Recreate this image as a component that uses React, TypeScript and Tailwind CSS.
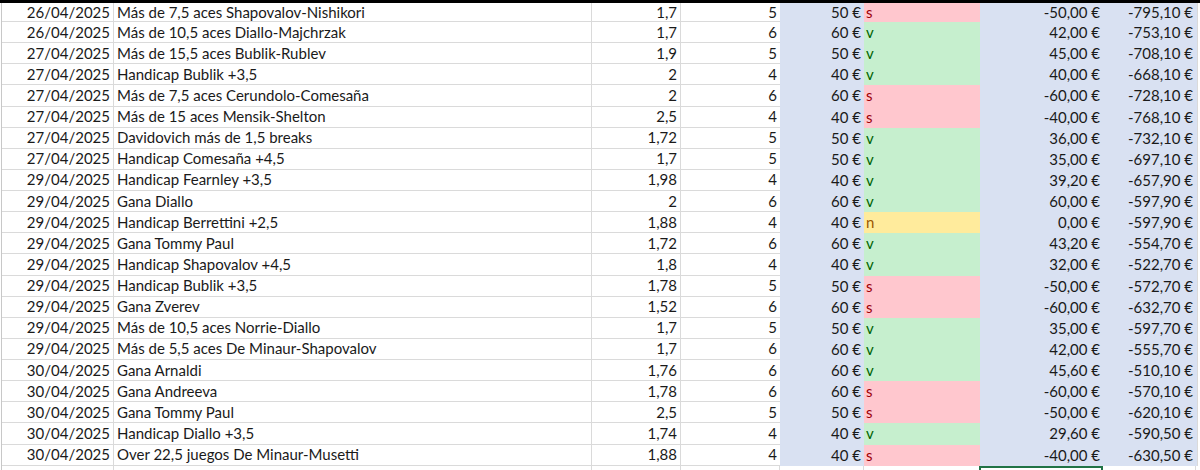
import React from 'react';

type Bet = {
  date: string;
  desc: string;
  odds: string;
  units: string;
  stake: string;
  res: 's' | 'v' | 'n';
  profit: string;
  total: string;
};

const rows: Bet[] = [
  { date: '26/04/2025', desc: 'Más de 7,5 aces Shapovalov-Nishikori', odds: '1,7', units: '5', stake: '50 €', res: 's', profit: '-50,00 €', total: '-795,10 €' },
  { date: '26/04/2025', desc: 'Más de 10,5 aces Diallo-Majchrzak', odds: '1,7', units: '6', stake: '60 €', res: 'v', profit: '42,00 €', total: '-753,10 €' },
  { date: '27/04/2025', desc: 'Más de 15,5 aces Bublik-Rublev', odds: '1,9', units: '5', stake: '50 €', res: 'v', profit: '45,00 €', total: '-708,10 €' },
  { date: '27/04/2025', desc: 'Handicap Bublik +3,5', odds: '2', units: '4', stake: '40 €', res: 'v', profit: '40,00 €', total: '-668,10 €' },
  { date: '27/04/2025', desc: 'Más de 7,5 aces Cerundolo-Comesaña', odds: '2', units: '6', stake: '60 €', res: 's', profit: '-60,00 €', total: '-728,10 €' },
  { date: '27/04/2025', desc: 'Más de 15 aces Mensik-Shelton', odds: '2,5', units: '4', stake: '40 €', res: 's', profit: '-40,00 €', total: '-768,10 €' },
  { date: '27/04/2025', desc: 'Davidovich más de 1,5 breaks', odds: '1,72', units: '5', stake: '50 €', res: 'v', profit: '36,00 €', total: '-732,10 €' },
  { date: '27/04/2025', desc: 'Handicap Comesaña +4,5', odds: '1,7', units: '5', stake: '50 €', res: 'v', profit: '35,00 €', total: '-697,10 €' },
  { date: '29/04/2025', desc: 'Handicap Fearnley +3,5', odds: '1,98', units: '4', stake: '40 €', res: 'v', profit: '39,20 €', total: '-657,90 €' },
  { date: '29/04/2025', desc: 'Gana Diallo', odds: '2', units: '6', stake: '60 €', res: 'v', profit: '60,00 €', total: '-597,90 €' },
  { date: '29/04/2025', desc: 'Handicap Berrettini +2,5', odds: '1,88', units: '4', stake: '40 €', res: 'n', profit: '0,00 €', total: '-597,90 €' },
  { date: '29/04/2025', desc: 'Gana Tommy Paul', odds: '1,72', units: '6', stake: '60 €', res: 'v', profit: '43,20 €', total: '-554,70 €' },
  { date: '29/04/2025', desc: 'Handicap Shapovalov +4,5', odds: '1,8', units: '4', stake: '40 €', res: 'v', profit: '32,00 €', total: '-522,70 €' },
  { date: '29/04/2025', desc: 'Handicap Bublik +3,5', odds: '1,78', units: '5', stake: '50 €', res: 's', profit: '-50,00 €', total: '-572,70 €' },
  { date: '29/04/2025', desc: 'Gana Zverev', odds: '1,52', units: '6', stake: '60 €', res: 's', profit: '-60,00 €', total: '-632,70 €' },
  { date: '29/04/2025', desc: 'Más de 10,5 aces Norrie-Diallo', odds: '1,7', units: '5', stake: '50 €', res: 'v', profit: '35,00 €', total: '-597,70 €' },
  { date: '29/04/2025', desc: 'Más de 5,5 aces De Minaur-Shapovalov', odds: '1,7', units: '6', stake: '60 €', res: 'v', profit: '42,00 €', total: '-555,70 €' },
  { date: '30/04/2025', desc: 'Gana Arnaldi', odds: '1,76', units: '6', stake: '60 €', res: 'v', profit: '45,60 €', total: '-510,10 €' },
  { date: '30/04/2025', desc: 'Gana Andreeva', odds: '1,78', units: '6', stake: '60 €', res: 's', profit: '-60,00 €', total: '-570,10 €' },
  { date: '30/04/2025', desc: 'Gana Tommy Paul', odds: '2,5', units: '5', stake: '50 €', res: 's', profit: '-50,00 €', total: '-620,10 €' },
  { date: '30/04/2025', desc: 'Handicap Diallo +3,5', odds: '1,74', units: '4', stake: '40 €', res: 'v', profit: '29,60 €', total: '-590,50 €' },
  { date: '30/04/2025', desc: 'Over 22,5 juegos De Minaur-Musetti', odds: '1,88', units: '4', stake: '40 €', res: 's', profit: '-40,00 €', total: '-630,50 €' },
];

const resStyle: Record<Bet['res'], string> = {
  s: 'bg-[#ffc7ce] text-[#9c0006]',
  v: 'bg-[#c6efce] text-[#006100]',
  n: 'bg-[#ffeb9c] text-[#9c5700]',
};

const grid = 'border-b border-r border-[#dadada]';

const Row: React.FC<{ bet: Bet; first?: boolean }> = ({ bet, first }) => (
  <div className={`flex ${first ? 'h-[19px]' : 'h-[21.14px]'}`}>
    <div className={`w-[112px] ${grid} flex items-center justify-end pr-[3px]`}>{bet.date}</div>
    <div className={`w-[478px] ${grid} flex items-center pl-[3px] whitespace-nowrap`}>{bet.desc}</div>
    <div className={`w-[89px] ${grid} flex items-center justify-end pr-[3px]`}>{bet.odds}</div>
    <div className="w-[99px] border-b border-[#dadada] flex items-center justify-end pr-[3px]">{bet.units}</div>
    <div className="w-[84px] bg-[#d9e1f2] flex items-center justify-end pr-[3px]">{bet.stake}</div>
    <div className={`w-[116px] flex items-center pl-[2px] ${resStyle[bet.res]}`}>{bet.res}</div>
    <div className="w-[124px] bg-[#d9e1f2] flex items-center justify-end pr-[4px]">{bet.profit}</div>
    <div className="w-[93px] bg-[#d9e1f2] flex items-center justify-end pr-[4px]">{bet.total}</div>
    <div className="flex-1 border-b border-l border-[#dadada]"></div>
  </div>
);

export default function App() {
  return (
    <div
      className="w-[1200px] h-[470px] overflow-hidden bg-white text-[#1a1a1a] text-[15px] leading-none"
      style={{ fontFamily: 'Lato, "Open Sans", sans-serif' }}
    >
      <div className="h-[3px] bg-black"></div>
      <div className="flex">
        <div className="w-[2px] border-r border-[#c8c8c8]"></div>
        <div className="flex flex-col">
          {rows.map((b, i) => (
            <Row key={i} bet={b} first={i === 0} />
          ))}
          <div className="flex h-[10px]">
            <div className={`w-[112px] ${grid}`}></div>
            <div className={`w-[478px] ${grid}`}></div>
            <div className={`w-[89px] ${grid}`}></div>
            <div className={`w-[99px] ${grid}`}></div>
            <div className={`w-[84px] ${grid}`}></div>
            <div className={`w-[116px] ${grid}`}></div>
            <div className="w-[124px] border-2 border-[#217346] -ml-[1px]"></div>
            <div className={`w-[93px] ${grid}`}></div>
          </div>
        </div>
      </div>
    </div>
  );
}
